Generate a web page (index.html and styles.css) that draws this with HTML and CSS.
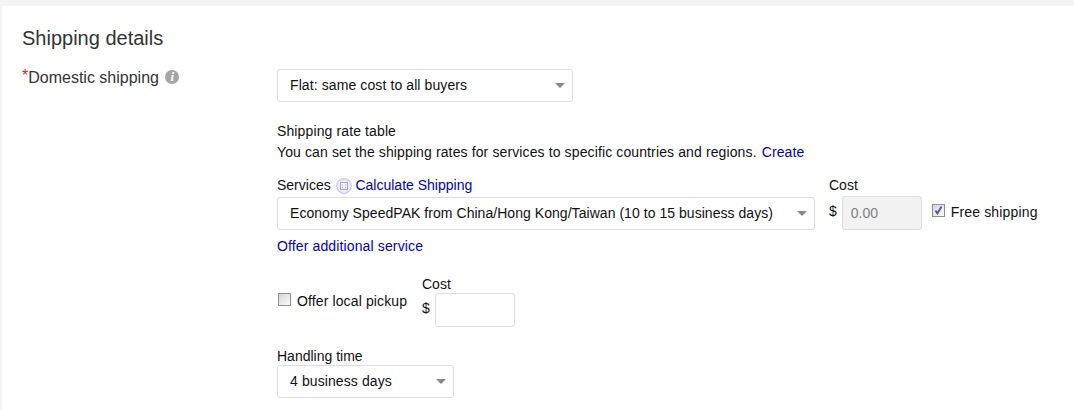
FILE: index.html
```html
<!DOCTYPE html>
<html lang="en">
  <head>
    <meta charset="UTF-8" />
    <title>Shipping details</title>
    <link rel="stylesheet" href="styles.css">
  </head>
  <body>
    <div class="panel">
      <h2 class="title">Shipping details</h2>
      <div class="row">
        <div class="side-label">
          <span class="req">*</span>Domestic shipping
          <span class="info">i</span>
        </div>
        <div class="fields">
          <div class="select flat">Flat: same cost to all buyers</div>

          <div class="rate-table">
            <div>Shipping rate table</div>
            <div>You can set the shipping rates for services to specific countries and regions. <a class="create" href="#">Create</a></div>
          </div>

          <div class="service-row">
            <div class="service-col">
              <div class="service-head">
                Services
                <span class="calc">
                  <svg width="16" height="16" viewBox="0 0 16 16">
                    <circle cx="8" cy="8" r="7.25" fill="#eeeefd" stroke="#cdcdf7" stroke-width="1.5" />
                    <rect x="4.5" y="4.5" width="7" height="7" fill="#f4f4fe" stroke="#a6a6e6" />
                    <path d="M6 7h1M9 7h1M6 9.5h1M9 9.5h1" stroke="#9c9ce2" />
                  </svg>
                </span>
                <a href="#">Calculate Shipping</a>
              </div>
              <div class="select service">Economy SpeedPAK from China/Hong Kong/Taiwan (10 to 15 business days)</div>
            </div>
            <div class="cost">
              <div class="cost-label">Cost</div>
              <div class="cost-line">
                <span class="dollar">$</span>
                <div class="input disabled">0.00</div>
              </div>
            </div>
            <label class="free">
              <span class="check">
                <svg width="11" height="11" viewBox="0 0 11 11">
                  <path d="M2.5 5.5l2 3 4-7" fill="none" stroke="#4a5a9c" stroke-width="1.8" />
                </svg>
              </span>
              Free shipping
            </label>
          </div>

          <a class="offer" href="#">Offer additional service</a>

          <div class="pickup-row">
            <label class="pickup">
              <span class="check"></span>
              Offer local pickup
            </label>
            <div class="cost">
              <div class="cost-label">Cost</div>
              <div class="cost-line">
                <span class="dollar">$</span>
                <div class="input"></div>
              </div>
            </div>
          </div>

          <div class="handling-label">Handling time</div>
          <div class="select handling">4 business days</div>
        </div>
      </div>
    </div>
  </body>
</html>
```

FILE: styles.css
```css
body {
  margin: 0;
  height: 410px;
  overflow: hidden;
  background-color: #f4f4f4;
  font-family: "Liberation Sans", Arial, sans-serif;
  font-size: 14px;
  line-height: 20px;
  color: #111;
}
a {
  color: #0000cc;
  text-decoration: none;
}
.panel {
  margin: 6px 0 0 2px;
  height: 404px;
  padding: 20px 0 0 20px;
  box-sizing: border-box;
  background-color: white;
}
.title {
  margin: 0;
  font-size: 20px;
  line-height: 24px;
  font-weight: normal;
  color: #333;
}
.row {
  display: flex;
  margin-top: 19px;
}
.side-label {
  width: 255px;
  font-size: 16px;
  line-height: 18px;
  color: #333;
}
.req {
  position: relative;
  top: -2px;
  color: #dd1e31;
}
.info {
  display: inline-block;
  width: 14px;
  height: 14px;
  margin-left: 2px;
  border-radius: 50%;
  background-color: #a5a5a5;
  color: white;
  font-family: "Liberation Serif", serif;
  font-size: 13px;
  font-style: italic;
  font-weight: bold;
  line-height: 14px;
  text-align: center;
  vertical-align: 2px;
}
.select {
  position: relative;
  height: 33px;
  box-sizing: border-box;
  padding-left: 12px;
  border: 1px solid #ddd;
  border-radius: 3px;
  line-height: 31px;
  letter-spacing: 0.1px;
  color: #111;
}
.select::after {
  content: "";
  position: absolute;
  top: 13px;
  right: 7px;
  border-left: 5px solid transparent;
  border-right: 5px solid transparent;
  border-top: 5px solid #888;
}
.flat {
  width: 296px;
}
.rate-table {
  margin-top: 19px;
  line-height: 21px;
  letter-spacing: 0.12px;
}
.create {
  margin-left: 1px;
}
.service-row {
  display: flex;
  margin-top: 11px;
}
.service-head {
  height: 23px;
  line-height: 22px;
}
.calc {
  display: inline-block;
  width: 16px;
  height: 16px;
  margin-left: 1px;
  vertical-align: -4px;
}
.service {
  width: 538px;
  letter-spacing: 0.045px;
}
.cost {
  display: flex;
  flex-direction: column;
}
.service-row .cost {
  margin-left: 14px;
}
.cost-label {
  height: 22px;
  line-height: 22px;
}
.pickup-row .cost-label {
  height: 20px;
}
.cost-line {
  display: flex;
  gap: 5px;
}
.dollar {
  line-height: 30px;
}
.input {
  width: 80px;
  height: 34px;
  box-sizing: border-box;
  padding-left: 8px;
  border: 1px solid #ddd;
  border-radius: 3px;
  line-height: 32px;
}
.disabled {
  background-color: #f2f2f2;
  color: #808080;
}
.free {
  display: flex;
  gap: 6px;
  align-items: flex-start;
  margin: 28px 0 0 10px;
  letter-spacing: 0.15px;
}
.check {
  display: block;
  flex-shrink: 0;
  width: 13px;
  height: 13px;
  margin-top: 2px;
  box-sizing: border-box;
  border: 1px solid #8e8f8f;
  background: linear-gradient(135deg, #d6d6d6, #fbfbfb);
}
.check svg {
  display: block;
}
.offer {
  display: block;
  margin-top: 6px;
  letter-spacing: 0.13px;
}
.pickup-row {
  display: flex;
  margin-top: 17px;
}
.pickup {
  display: flex;
  gap: 6px;
  align-items: flex-start;
  width: 145px;
  margin-top: 18px;
  padding-left: 1px;
  box-sizing: border-box;
  letter-spacing: 0.12px;
}
.handling-label {
  height: 19px;
  margin-top: 19px;
}
.handling {
  width: 177px;
}
```
